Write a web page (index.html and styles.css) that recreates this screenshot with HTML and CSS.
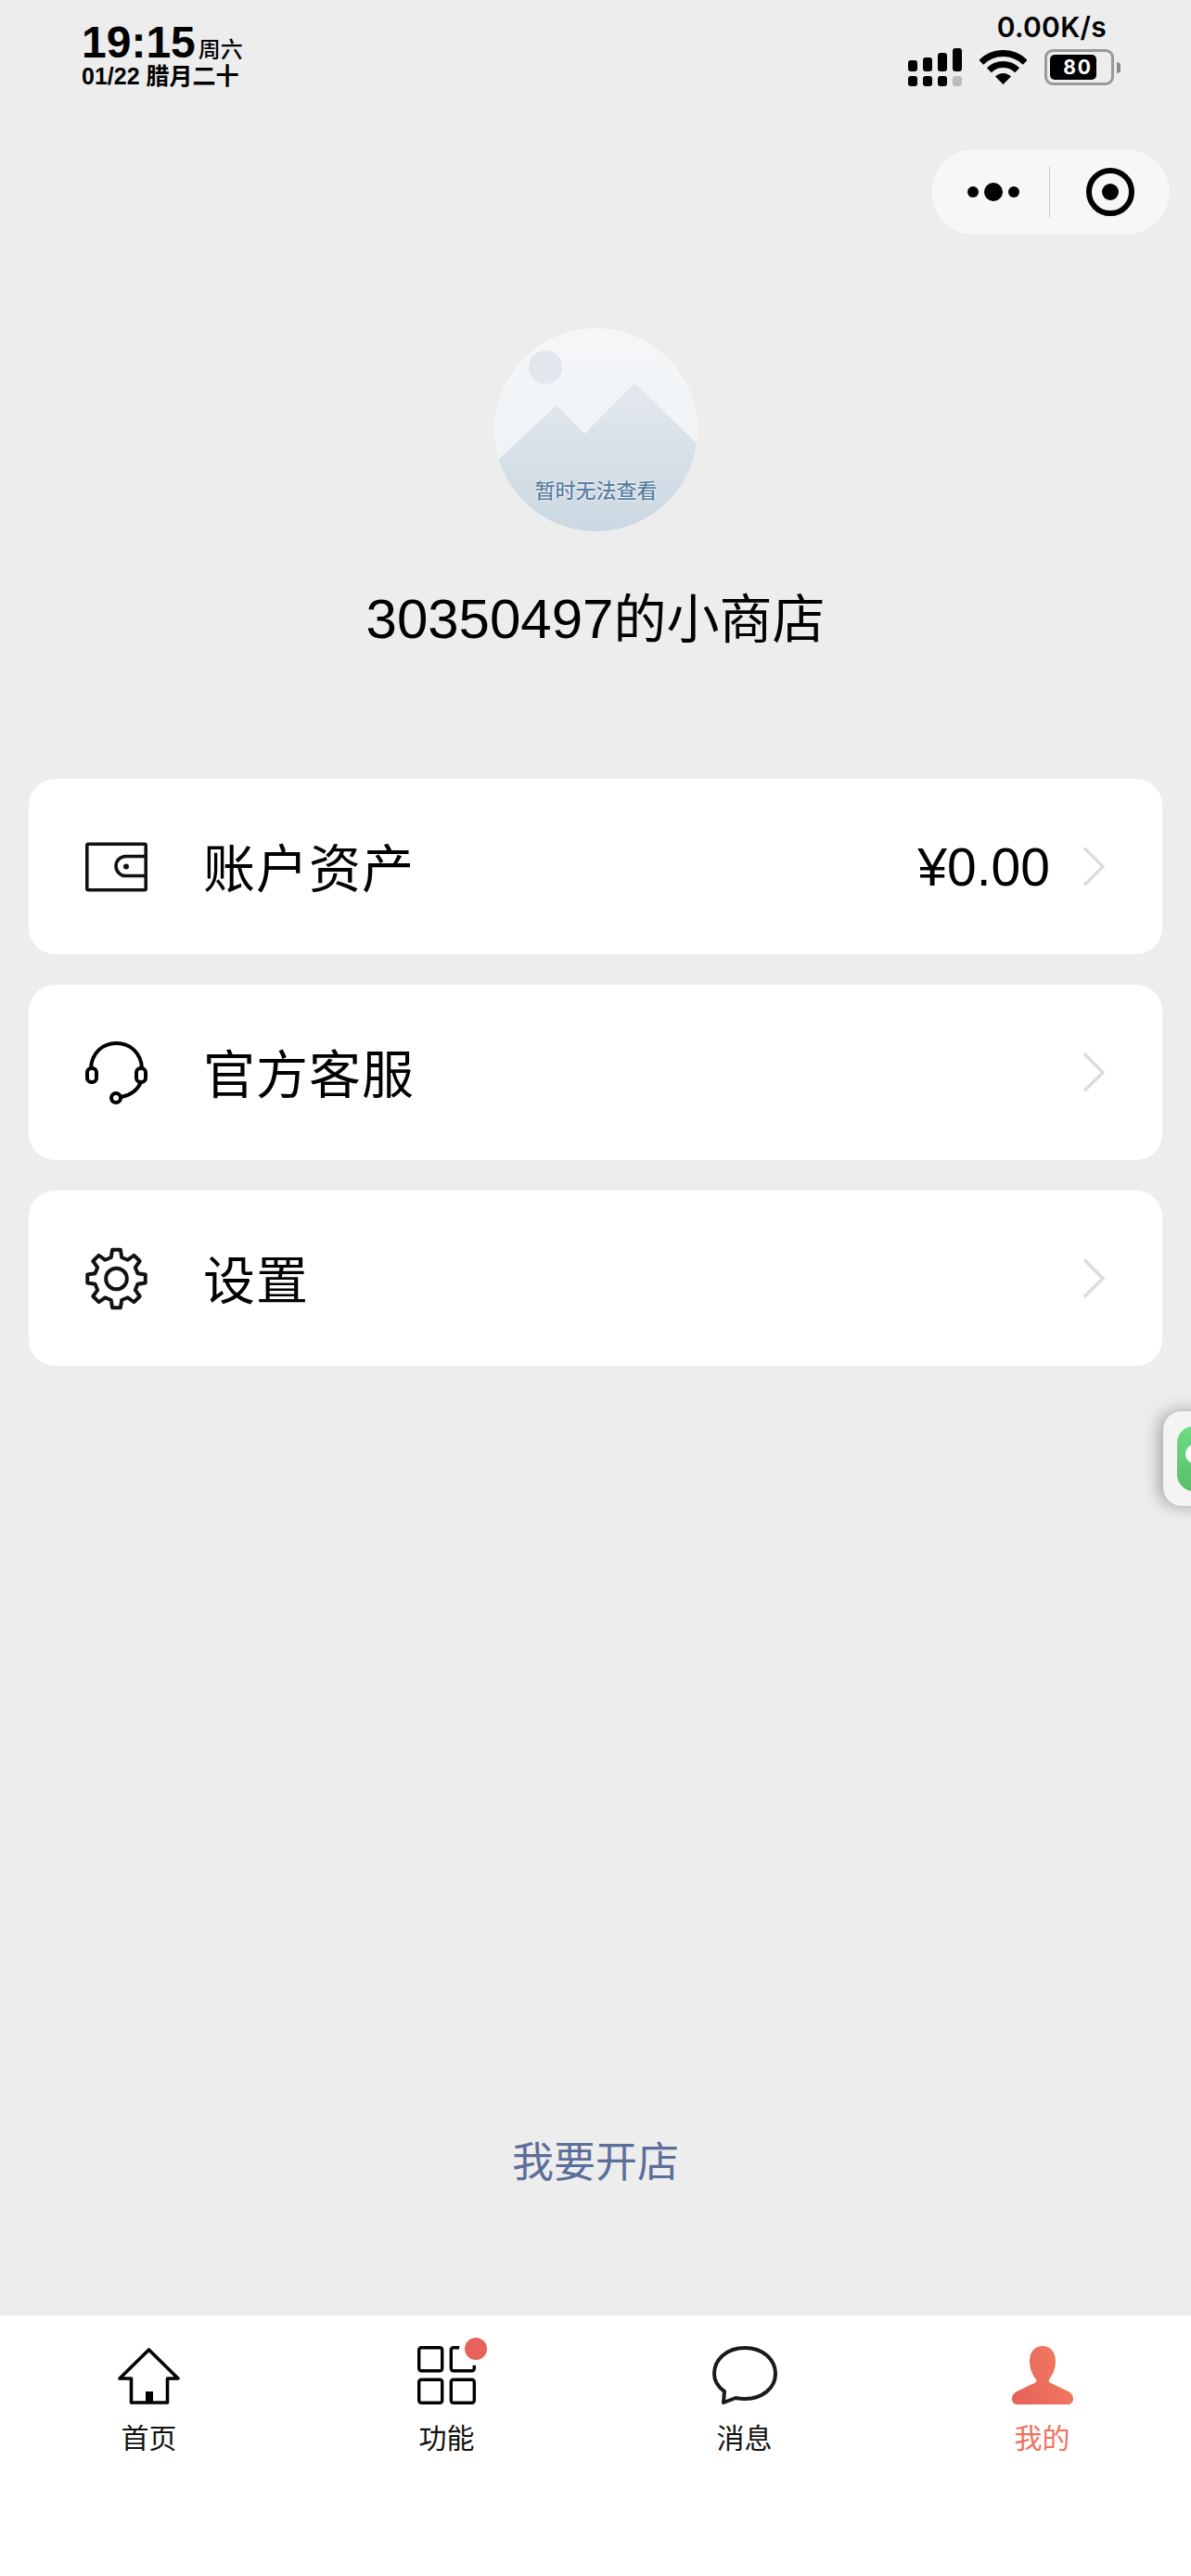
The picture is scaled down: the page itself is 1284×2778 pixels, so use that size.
FILE: index.html
```html
<!DOCTYPE html>
<html lang="zh-CN">
<head>
    <meta charset="UTF-8">
    <meta name="viewport" content="width=device-width, initial-scale=1.0">
    <title>我的</title>
    <link rel="stylesheet" href="styles.css">
</head>
<body>
    <div class="page">
        <!-- Status bar -->
        <div class="status-bar">
            <div class="status-left">
                <div class="status-time">19:15<span class="status-week">周六</span></div>
                <div class="status-date">01/22 腊月二十</div>
            </div>
            <div class="status-right">
                <div class="status-speed">0.00K/s</div>
                <div class="status-icons">
                    <svg class="icon-signal" viewBox="0 0 58 41">
                        <rect x="0" y="13" width="10" height="12" rx="3"/>
                        <rect x="16" y="10" width="10" height="15" rx="3"/>
                        <rect x="32" y="5" width="10" height="20" rx="3"/>
                        <rect x="48" y="0" width="10" height="25" rx="3"/>
                        <rect x="0" y="30" width="10" height="11" rx="3"/>
                        <rect x="16" y="30" width="10" height="11" rx="3"/>
                        <rect x="32" y="30" width="10" height="11" rx="3"/>
                        <rect x="48" y="30" width="10" height="11" rx="3" fill="#bcbcbc"/>
                    </svg>
                    <svg class="icon-wifi" viewBox="0 0 51 37">
                        <path d="M1.8 13.3A33.5 33.5 0 0 1 49.2 13.3" fill="none" stroke="#000" stroke-width="7"/>
                        <path d="M10.3 21.8A21.5 21.5 0 0 1 40.7 21.8" fill="none" stroke="#000" stroke-width="7"/>
                        <path d="M25.5 37L17 28.5A12 12 0 0 1 34 28.5Z"/>
                    </svg>
                    <div class="battery">
                        <div class="battery-body"><div class="battery-level">80</div></div>
                        <div class="battery-nib"></div>
                    </div>
                </div>
            </div>
        </div>

        <!-- Mini program capsule -->
        <div class="capsule">
            <div class="capsule-more">
                <span class="dot"></span>
                <span class="dot dot-big"></span>
                <span class="dot"></span>
            </div>
            <div class="capsule-close"><span class="target"></span></div>
        </div>

        <!-- Shop header -->
        <div class="avatar">
            <svg viewBox="0 0 219 219">
                <defs>
                    <linearGradient id="skyFill" x1="0" y1="0" x2="0" y2="1">
                        <stop offset="0" stop-color="#f5f7f9"/>
                        <stop offset="1" stop-color="#edf1f4"/>
                    </linearGradient>
                    <linearGradient id="hillFill" x1="0" y1="0" x2="0" y2="1">
                        <stop offset="0" stop-color="#e3e8ee"/>
                        <stop offset="1" stop-color="#cbd8e1"/>
                    </linearGradient>
                </defs>
                <rect width="219" height="219" fill="url(#skyFill)"/>
                <circle cx="55" cy="42" r="18" fill="#e1e7ed"/>
                <path d="M5 141L67 83L97 114L151 59L219 125V219H0V141Z" fill="url(#hillFill)"/>
            </svg>
            <span class="avatar-text">暂时无法查看</span>
        </div>
        <div class="shop-name"><span class="shop-id">30350497</span>的小商店</div>

        <!-- Menu -->
        <div class="menu">
            <div class="card">
                <svg class="card-icon" viewBox="0 0 67 53" fill="none" stroke="#111" stroke-width="3.6">
                    <rect x="1.8" y="1.8" width="63.4" height="49.4" rx="1.5"/>
                    <path d="M65 15H43.5a10.5 10.5 0 0 0 0 21H65"/>
                    <circle cx="44" cy="26" r="3" fill="#111" stroke="none"/>
                </svg>
                <span class="card-label">账户资产</span>
                <span class="card-value">¥0.00</span>
                <svg class="chevron" viewBox="0 0 23 43"><path d="M1 1.5L21 21.5L1 41.5"/></svg>
            </div>
            <div class="card">
                <svg class="card-icon" viewBox="0 0 67 68" fill="none" stroke="#000" stroke-width="4">
                    <path d="M6 29C7 12 19 2 33.5 2S60 12 61 29"/>
                    <rect x="2" y="29" width="10" height="15" rx="4.5"/>
                    <rect x="55" y="29" width="10" height="15" rx="4.5"/>
                    <path d="M60 44C56 53 49 58 38.5 60"/>
                    <circle cx="33" cy="61" r="5"/>
                </svg>
                <span class="card-label">官方客服</span>
                <svg class="chevron" viewBox="0 0 23 43"><path d="M1 1.5L21 21.5L1 41.5"/></svg>
            </div>
            <div class="card">
                <svg class="card-icon" viewBox="-34 -34 68 68" fill="none" stroke="#111" stroke-width="4" stroke-linejoin="round">
                    <path d="M-4.5-31.7L4.5-31.7L5.8-23.3L12.4-20.6L19.3-25.6L25.6-19.3L20.6-12.4L23.3-5.8L31.7-4.5L31.7 4.5L23.3 5.8L20.6 12.4L25.6 19.3L19.3 25.6L12.4 20.6L5.8 23.3L4.5 31.7L-4.5 31.7L-5.8 23.3L-12.4 20.6L-19.3 25.6L-25.6 19.3L-20.6 12.4L-23.3 5.8L-31.7 4.5L-31.7-4.5L-23.3-5.8L-20.6-12.4L-25.6-19.3L-19.3-25.6L-12.4-20.6L-5.8-23.3Z"/>
                    <circle cx="0" cy="0" r="11.5"/>
                </svg>
                <span class="card-label">设置</span>
                <svg class="chevron" viewBox="0 0 23 43"><path d="M1 1.5L21 21.5L1 41.5"/></svg>
            </div>
        </div>

        <div class="open-shop">我要开店</div>

        <!-- Bottom tabs -->
        <div class="tab-bar">
            <div class="tab">
                <div class="tab-icon">
                    <svg class="icon-home" viewBox="0 0 67 61" fill="none" stroke="#000" stroke-width="3.6" stroke-linejoin="round">
                        <path d="M33.5 2L2 33H14.5V59H53.5V33H65Z"/>
                        <rect x="30" y="47" width="8" height="12" fill="#000" stroke="none"/>
                    </svg>
                </div>
                <div class="tab-label">首页</div>
            </div>
            <div class="tab">
                <div class="tab-icon">
                    <svg class="icon-grid" viewBox="0 0 63 63" fill="none" stroke="#000" stroke-width="3.4">
                        <rect x="1.7" y="1.7" width="25" height="25" rx="2.5"/>
                        <rect x="36.3" y="1.7" width="25" height="25" rx="2.5"/>
                        <rect x="1.7" y="36.3" width="25" height="25" rx="2.5"/>
                        <rect x="36.3" y="36.3" width="25" height="25" rx="2.5"/>
                    </svg>
                    <span class="tab-badge"></span>
                </div>
                <div class="tab-label">功能</div>
            </div>
            <div class="tab">
                <div class="tab-icon">
                    <svg class="icon-message" viewBox="0 0 70 63" fill="none" stroke="#1a1a1a" stroke-width="4" stroke-linejoin="round">
                        <path d="M13 49C6 44 2 37 2 30C2 14 16 2 35 2C54 2 68 14 68 30C68 45 54 57 35 57C31 57 28 56.5 25 56L12 61Z"/>
                    </svg>
                </div>
                <div class="tab-label">消息</div>
            </div>
            <div class="tab tab-active">
                <div class="tab-icon">
                    <svg class="icon-me" viewBox="0 0 66 63">
                        <defs>
                            <linearGradient id="meFill" x1="0" y1="1" x2="1" y2="0.6">
                                <stop offset="0" stop-color="#e6605a"/>
                                <stop offset="1" stop-color="#f07a60"/>
                            </linearGradient>
                        </defs>
                        <path fill="url(#meFill)" d="M33 0C42 0 47 7 47 16C47 26 43 32 40 36C39 38 40 39 42 40L61 49C64 51 66 53 66 57C66 61 63 63 60 63L6 63C3 63 0 61 0 57C0 53 2 51 5 49L24 40C26 39 27 38 26 36C23 32 19 26 19 16C19 7 24 0 33 0Z"/>
                    </svg>
                </div>
                <div class="tab-label">我的</div>
            </div>
        </div>

        <!-- Floating chat button, cut off by the screen edge -->
        <div class="float-chat">
            <div class="float-chat-icon"><span class="float-chat-bubble"></span></div>
        </div>
    </div>
</body>
</html>
```
FILE: styles.css
```css
body {
    margin: 0;
    padding: 0;
    background-color: #ededed;
    font-family: 'Noto Sans CJK SC', 'Noto Sans', sans-serif;
    color: #000;
}
.page {
    position: relative;
    width: 1284px;
    height: 2778px;
    overflow: hidden;
    display: flex;
    flex-direction: column;
}

/* Status bar */
.status-bar {
    height: 160px;
    box-sizing: border-box;
    padding: 11px 76px 0 88px;
    display: flex;
    justify-content: space-between;
    flex-shrink: 0;
}
.status-left {
    padding-top: 12px;
    font-family: 'Liberation Sans', 'Noto Sans CJK SC', sans-serif;
    font-weight: 700;
}
.status-time {
    height: 46px;
    font-size: 48px;
    line-height: 46px;
    white-space: nowrap;
}
.status-week {
    font-size: 24px;
    line-height: 1;
    font-weight: 500;
    margin-left: 3px;
    font-family: 'Noto Sans CJK SC', sans-serif;
}
.status-date {
    font-size: 25px;
    line-height: 26px;
    white-space: nowrap;
}
.status-right {
    display: flex;
    flex-direction: column;
    align-items: flex-end;
}
.status-speed {
    font-family: Inter, 'Liberation Sans', sans-serif;
    font-weight: 600;
    font-size: 30px;
    line-height: 36px;
    margin-right: 15px;
    letter-spacing: 0.3px;
}
.status-icons {
    margin-top: 5px;
    display: flex;
    align-items: center;
    gap: 19px;
}
.icon-signal {
    width: 58px;
    height: 41px;
}
.icon-wifi {
    width: 51px;
    height: 37px;
}
.battery {
    display: flex;
    align-items: center;
    gap: 3px;
}
.battery-body {
    width: 75px;
    height: 39px;
    box-sizing: border-box;
    border: 3px solid #999;
    border-radius: 9px;
    padding: 3px;
}
.battery-level {
    width: 50px;
    height: 27px;
    background: #000;
    border-radius: 5px;
    color: #fff;
    font-family: Inter, 'Liberation Sans', sans-serif;
    font-weight: 700;
    font-size: 21px;
    line-height: 27px;
    letter-spacing: 2px;
    text-align: right;
    padding-right: 4px;
    box-sizing: border-box;
}
.battery-nib {
    width: 4px;
    height: 12px;
    background: #8a8a8a;
    border-radius: 0 4px 4px 0;
}

/* Capsule */
.capsule {
    width: 259px;
    height: 94px;
    flex-shrink: 0;
    box-sizing: border-box;
    margin-left: 1003px;
    display: flex;
    align-items: center;
    background: #f7f7f7;
    border: 1px solid #ebebeb;
    border-radius: 47px;
}
.capsule-more {
    width: 128px;
    height: 56px;
    box-sizing: border-box;
    padding-left: 39px;
    display: flex;
    align-items: center;
    gap: 6px;
    border-right: 1px solid #ccc;
}
.dot {
    width: 12px;
    height: 12px;
    background: #000;
    border-radius: 50%;
}
.dot-big {
    width: 20px;
    height: 20px;
}
.capsule-close {
    flex: 1;
    display: flex;
    justify-content: center;
}
.target {
    width: 52px;
    height: 52px;
    box-sizing: border-box;
    border: 6px solid #000;
    border-radius: 50%;
    display: flex;
    align-items: center;
    justify-content: center;
}
.target::after {
    content: "";
    width: 18px;
    height: 18px;
    background: #000;
    border-radius: 50%;
}

/* Shop header */
.avatar {
    position: relative;
    width: 219px;
    height: 219px;
    flex-shrink: 0;
    margin: 100px 0 0 533px;
    border-radius: 50%;
    overflow: hidden;
}
.avatar svg {
    display: block;
    width: 219px;
    height: 219px;
}
.avatar-text {
    position: absolute;
    left: 0;
    right: 0;
    top: 158px;
    text-align: center;
    font-size: 22px;
    font-weight: 500;
    line-height: 30px;
    color: #5a7fa1;
    text-shadow: 0 0 2px #fff, 0 0 2px #fff;
}
.shop-name {
    margin-top: 50px;
    height: 80px;
    font-size: 57px;
    line-height: 80px;
    text-align: center;
    flex-shrink: 0;
}
.shop-id {
    font-family: 'Liberation Sans', sans-serif;
    font-size: 60px;
    line-height: 1;
}

/* Menu */
.menu {
    margin: 137px 31px 0;
    display: flex;
    flex-direction: column;
    gap: 33px;
    flex-shrink: 0;
}
.card {
    height: 189px;
    box-sizing: border-box;
    padding: 0 62px 0 61px;
    display: flex;
    align-items: center;
    background: #fff;
    border-radius: 28px;
}
.card-icon {
    width: 67px;
    height: 68px;
    flex-shrink: 0;
}
.card-label {
    margin-left: 60px;
    padding-bottom: 4px;
    font-size: 56px;
    line-height: 70px;
    letter-spacing: 1px;
}
.card-value {
    margin-left: auto;
    font-family: 'Liberation Sans', sans-serif;
    font-size: 57px;
    line-height: 70px;
}
.chevron {
    width: 23px;
    height: 43px;
    margin-left: 36px;
    flex-shrink: 0;
    fill: none;
    stroke: #dcdcdc;
    stroke-width: 3.4;
}
.card > .card-label + .chevron {
    margin-left: auto;
}

.open-shop {
    margin-top: auto;
    margin-bottom: 138px;
    font-size: 45px;
    line-height: 60px;
    text-align: center;
    color: #5c6e9a;
}

/* Tab bar */
.tab-bar {
    height: 281px;
    flex-shrink: 0;
    box-sizing: border-box;
    padding-top: 33px;
    display: grid;
    grid-template-columns: repeat(4, 321px);
    background: #fff;
}
.tab {
    display: flex;
    flex-direction: column;
    align-items: center;
}
.tab-icon {
    position: relative;
    height: 63px;
    display: flex;
    align-items: flex-end;
}
.tab-label {
    margin-top: 14px;
    font-size: 30px;
    line-height: 40px;
    color: #111;
}
.tab-active .tab-label {
    color: #ee7260;
}
.icon-home {
    width: 67px;
    height: 61px;
}
.icon-grid {
    width: 63px;
    height: 63px;
}
.icon-message {
    width: 70px;
    height: 63px;
}
.icon-me {
    width: 66px;
    height: 63px;
}
.tab-badge {
    position: absolute;
    top: -9px;
    right: -12px;
    width: 24px;
    height: 24px;
    background: #e8625c;
    border-radius: 50%;
    box-shadow: 0 0 0 6px #fff;
}

/* Floating chat button */
.float-chat {
    position: absolute;
    top: 1522px;
    left: 1254px;
    width: 80px;
    height: 102px;
    box-sizing: border-box;
    padding: 16px 0 0 15px;
    background: #f4f4f4;
    border-radius: 20px;
    box-shadow: -4px 0 18px rgba(0,0,0,0.32);
}
.float-chat-icon {
    position: relative;
    width: 70px;
    height: 70px;
    background: linear-gradient(#6fdd82, #59bd69);
    border-radius: 18px;
    overflow: hidden;
}
.float-chat-bubble {
    position: absolute;
    left: 9px;
    top: 17px;
    width: 36px;
    height: 26px;
    background: #fff;
    border-radius: 50%;
}
```
